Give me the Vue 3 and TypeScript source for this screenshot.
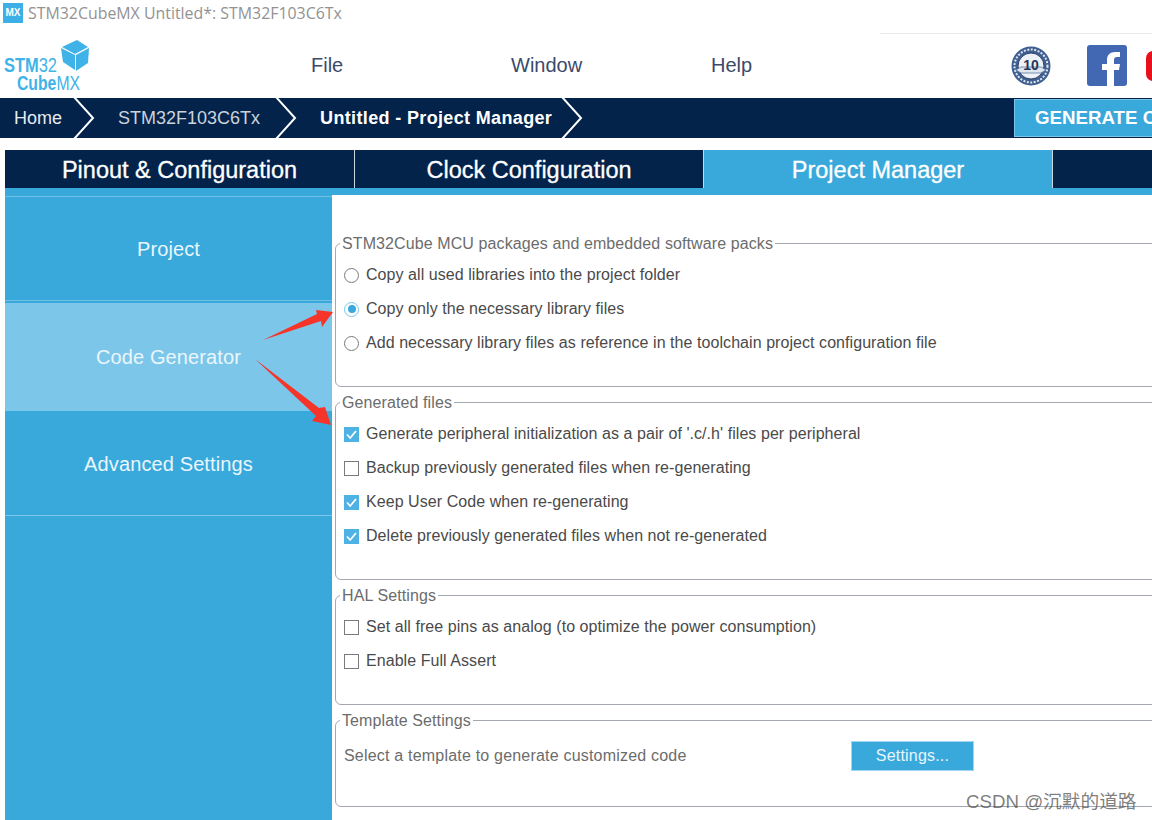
<script setup lang="ts">
interface Option {
  label: string
  kind: 'radio' | 'check'
  on: boolean
}

interface Group {
  title: string
  options: Option[]
}

const menus = ['File', 'Window', 'Help']
const tabs = ['Pinout & Configuration', 'Clock Configuration', 'Project Manager']
const sideItems = ['Project', 'Code Generator', 'Advanced Settings']

const groups: Group[] = [
  {
    title: 'STM32Cube MCU packages and embedded software packs',
    options: [
      { label: 'Copy all used libraries into the project folder', kind: 'radio', on: false },
      { label: 'Copy only the necessary library files', kind: 'radio', on: true },
      { label: 'Add necessary library files as reference in the toolchain project configuration file', kind: 'radio', on: false },
    ],
  },
  {
    title: 'Generated files',
    options: [
      { label: "Generate peripheral initialization as a pair of '.c/.h' files per peripheral", kind: 'check', on: true },
      { label: 'Backup previously generated files when re-generating', kind: 'check', on: false },
      { label: 'Keep User Code when re-generating', kind: 'check', on: true },
      { label: 'Delete previously generated files when not re-generated', kind: 'check', on: true },
    ],
  },
  {
    title: 'HAL Settings',
    options: [
      { label: 'Set all free pins as analog (to optimize the power consumption)', kind: 'check', on: false },
      { label: 'Enable Full Assert', kind: 'check', on: false },
    ],
  },
]
</script>

<template>
  <div class="app">
    <div class="titlebar">
      <span class="mx-icon">MX</span>
      <span class="title-text">STM32CubeMX Untitled*: STM32F103C6Tx</span>
    </div>

    <div class="menubar">
      <svg class="logo" width="92" height="56" viewBox="0 0 92 56">
        <path class="cube" d="M61 9 75 16V31L63 23Z" />
        <path class="cube" d="M76 16 89 9 88 24 76 32Z" />
        <path class="cube" d="M62 8 77 1 88 8 75 15Z" />
        <text class="logo-text" x="4" y="33" textLength="53" lengthAdjust="spacingAndGlyphs"><tspan font-weight="700">STM</tspan>32</text>
        <text class="logo-text" x="17" y="51" textLength="63" lengthAdjust="spacingAndGlyphs"><tspan font-weight="700">Cube</tspan>MX</text>
      </svg>
      <nav class="menus">
        <span v-for="m in menus" :key="m" class="menu">{{ m }}</span>
      </nav>
      <div class="social">
        <svg class="badge" width="40" height="40" viewBox="0 0 40 40">
          <circle cx="20" cy="20" r="19.5" fill="#3f5f90" />
          <circle cx="20" cy="20" r="16.5" fill="none" stroke="#dfe7f0" stroke-width="2" stroke-dasharray="2 1.5" />
          <circle cx="20" cy="20" r="13" fill="#eef2f7" stroke="#2f4468" />
          <path d="M5 24 10 21H30L35 24 30 27H10Z" fill="#dfe6ef" stroke="#5b779f" stroke-width="0.8" />
          <text class="badge-text" x="20" y="24" text-anchor="middle">10</text>
        </svg>
        <svg class="fb" width="40" height="41" viewBox="0 0 40 41">
          <rect width="40" height="41" rx="3" fill="#4368b3" />
          <path d="M27 41V25h5l1-6h-6v-4c0-2 1-3 3-3h3V7h-5c-5 0-8 3-8 8v4h-5v6h5v16Z" fill="#fff" />
        </svg>
        <span class="yt"></span>
      </div>
    </div>

    <div class="crumbs">
      <div class="crumb home">
        <span>Home</span>
        <svg class="chev" width="22" height="40" viewBox="0 0 22 40"><path d="M1 -1 20 20 1 41" /></svg>
      </div>
      <div class="crumb chip">
        <span>STM32F103C6Tx</span>
        <svg class="chev" width="22" height="40" viewBox="0 0 22 40"><path d="M1 -1 20 20 1 41" /></svg>
      </div>
      <div class="crumb current">
        <span>Untitled - Project Manager</span>
        <svg class="chev" width="22" height="40" viewBox="0 0 22 40"><path d="M1 -1 20 20 1 41" /></svg>
      </div>
      <button class="generate">GENERATE CODE</button>
    </div>

    <div class="tabs">
      <div v-for="(t, i) in tabs" :key="t" class="tab" :class="{ active: i === 2 }">{{ t }}</div>
      <div class="tab tab-rest"></div>
    </div>
    <div class="tab-line"></div>

    <div class="workspace">
      <aside class="sidebar">
        <div
          v-for="(s, i) in sideItems"
          :key="s"
          class="side-item"
          :class="['side-' + i, { selected: i === 1 }]"
        >
          {{ s }}
        </div>
      </aside>

      <main class="content">
        <fieldset v-for="g in groups" :key="g.title" class="group">
          <legend>{{ g.title }}</legend>
          <div v-for="o in g.options" :key="o.label" class="option">
            <span v-if="o.kind === 'radio'" class="radio" :class="{ on: o.on }"></span>
            <span v-else class="check" :class="{ on: o.on }">
              <svg v-if="o.on" width="15" height="15" viewBox="0 0 15 15"><path d="M3 7.5 6.2 11 12 4" /></svg>
            </span>
            <span>{{ o.label }}</span>
          </div>
        </fieldset>

        <fieldset class="group template">
          <legend>Template Settings</legend>
          <div class="template-row">
            <span class="template-label">Select a template to generate customized code</span>
            <button class="settings">Settings...</button>
          </div>
        </fieldset>
      </main>
    </div>

    <svg class="arrows" width="120" height="140" viewBox="240 300 120 140">
      <path d="M263 340 317 314 316 310 333 312 322 327 321 321Z" />
      <path d="M255 359 319 408 325 407 331 425 312 421 316 416Z" />
    </svg>

    <span class="watermark">CSDN @沉默的道路</span>
  </div>
</template>

<style scoped>
.app {
  position: relative;
  width: 1152px;
  height: 820px;
  overflow: hidden;
  background: #fff;
  font-family: "Liberation Sans", Arial, sans-serif;
}

.titlebar {
  height: 33px;
  display: flex;
  align-items: flex-start;
  gap: 5px;
  padding: 3px 0 0 3px;
  box-sizing: border-box;
}

.mx-icon {
  width: 20px;
  height: 20px;
  background: #3cb0e6;
  color: #fff;
  font-size: 10px;
  font-weight: 700;
  line-height: 20px;
  text-align: center;
}

.title-text {
  font-family: "Open Sans", sans-serif;
  font-size: 15.9px;
  line-height: 21px;
  color: #929292;
}

.menubar {
  height: 65px;
  display: flex;
  align-items: center;
  box-sizing: border-box;
  background: linear-gradient(#e9e9e9, #e9e9e9) 880px 0 / 272px 1px no-repeat;
}

.logo {
  flex: none;
  margin-top: 3px;
}

.cube {
  fill: #3fb3e8;
}

.logo-text {
  font-family: "Liberation Sans", sans-serif;
  font-size: 21px;
  fill: #3fb3e8;
}

.menus {
  display: flex;
  flex: none;
  margin-left: 219px;
  width: 700px;
  padding-bottom: 1px;
}

.menu {
  width: 200px;
  font-size: 20px;
  color: #3b4a6b;
}

.social {
  display: flex;
  align-items: center;
  flex: none;
}

.badge-text {
  font-family: "Liberation Sans", sans-serif;
  font-size: 14px;
  font-weight: 700;
  fill: #24375a;
}

.fb {
  margin-left: 36px;
}

.yt {
  width: 14px;
  height: 30px;
  margin-left: 19px;
  background: #e8101c;
  border-radius: 7px 0 0 7px;
}

.crumbs {
  height: 40px;
  display: flex;
  background: #03234b;
  color: #fff;
  font-size: 18px;
  line-height: 40px;
}

.crumb {
  display: flex;
  flex: none;
}

.crumb > span {
  display: block;
}

.home {
  padding-left: 14px;
  color: #e6ebf0;
}

.home .chev {
  margin: 0 23px 0 11px;
}

.chip {
  color: #ccd3dc;
}

.chip .chev {
  margin: 0 23px 0 15px;
}

.current {
  font-weight: 700;
  letter-spacing: 0.35px;
}

.current .chev {
  margin-left: 9px;
}

.chev path {
  fill: none;
  stroke: #fff;
  stroke-width: 2;
}

.generate {
  position: absolute;
  left: 1014px;
  top: 99px;
  width: 200px;
  height: 38px;
  padding: 0 0 0 20px;
  border: 1px solid #7cc6ea;
  background: #39a9dc;
  color: #fff;
  font: 700 18.7px "Liberation Sans", sans-serif;
  text-align: left;
  white-space: nowrap;
}

.tabs {
  display: flex;
  height: 38px;
  margin: 12px 0 0 5px;
}

.tab {
  width: 349px;
  flex: none;
  padding-top: 1px;
  background: #03234b;
  border-right: 1px solid #cfd6de;
  box-sizing: border-box;
  color: #fff;
  font-size: 23.5px;
  line-height: 38px;
  text-align: center;
  -webkit-text-stroke: 0.3px #fff;
}

.tab:first-child {
  width: 350px;
}

.tab.active {
  background: #39a9dc;
}

.tab-rest {
  flex: 1;
  border-right: 0;
}

.tab-line {
  height: 7px;
  margin-left: 5px;
  background: #39a9dc;
}

.workspace {
  display: flex;
  height: 625px;
  margin-left: 5px;
}

.sidebar {
  width: 327px;
  flex: none;
  background: #39a9dc;
  color: #eaf6fc;
  font-size: 20px;
  letter-spacing: 0.12px;
  text-align: center;
}

.side-item {
  display: flex;
  align-items: center;
  justify-content: center;
  box-sizing: border-box;
}

.side-0 {
  height: 105px;
  margin-top: 1px;
  border-top: 1px solid #6fc0e6;
  border-bottom: 1px solid #6fc0e6;
  padding-top: 1px;
}

.side-1 {
  height: 108px;
  margin-top: 2px;
}

.side-2 {
  height: 105px;
  padding-top: 2px;
  border-bottom: 1px solid #7cc6ea;
}

.selected {
  background: #7cc6ea;
}

.content {
  flex: 1;
  min-width: 0;
  padding: 37px 0 0 3px;
}

.group {
  width: 900px;
  margin: 0 0 4px;
  padding: 4px 8px 26px;
  border: 1.5px solid #a3a8b0;
  border-radius: 6px;
  box-sizing: border-box;
  color: #4a4a4a;
  font-size: 16px;
  letter-spacing: 0.06px;
}

.group legend {
  margin-left: -4px;
  padding: 2px 2px 0;
  line-height: 20px;
  color: #6c6c6c;
  letter-spacing: 0.1px;
}

.option {
  display: flex;
  align-items: center;
  gap: 7px;
  height: 34px;
  white-space: nowrap;
}

.radio {
  position: relative;
  width: 15px;
  height: 15px;
  flex: none;
  border: 1.5px solid #7a7a7a;
  border-radius: 50%;
  background: #fff;
  box-sizing: border-box;
}

.radio.on {
  border-color: #7cc6ea;
}

.radio.on::after {
  content: "";
  position: absolute;
  inset: 2.5px;
  border-radius: 50%;
  background: #39a9dc;
}

.check {
  width: 15px;
  height: 15px;
  flex: none;
  border: 1.5px solid #7a7a7a;
  background: #fff;
  box-sizing: border-box;
  display: block;
}

.check.on {
  border: 0;
  background: #4eb2e4;
}

.check svg {
  display: block;
}

.check path {
  fill: none;
  stroke: #fff;
  stroke-width: 1.8;
}

.template {
  padding: 8px 8px 33px;
}

.template-row {
  display: flex;
  align-items: center;
  height: 34px;
  white-space: nowrap;
  color: #6c6c6c;
}

.template-label {
  width: 507px;
  letter-spacing: 0.2px;
}

.settings {
  width: 123px;
  height: 30px;
  padding: 0;
  border: 1px solid #9fd6f0;
  background: #39a9dc;
  color: #e8f6fd;
  font: 16px "Liberation Sans", sans-serif;
  letter-spacing: 0.2px;
}

.arrows {
  position: absolute;
  left: 240px;
  top: 300px;
}

.arrows path {
  fill: #f5352a;
}

.watermark {
  position: absolute;
  left: 966px;
  top: 791px;
  font-family: "Liberation Sans", "Noto Sans CJK SC", sans-serif;
  font-size: 18.7px;
  line-height: 22px;
  color: rgba(70, 70, 70, 0.7);
  white-space: nowrap;
}
</style>

<style>
html,
body {
  margin: 0;
  overflow: hidden;
}
</style>
